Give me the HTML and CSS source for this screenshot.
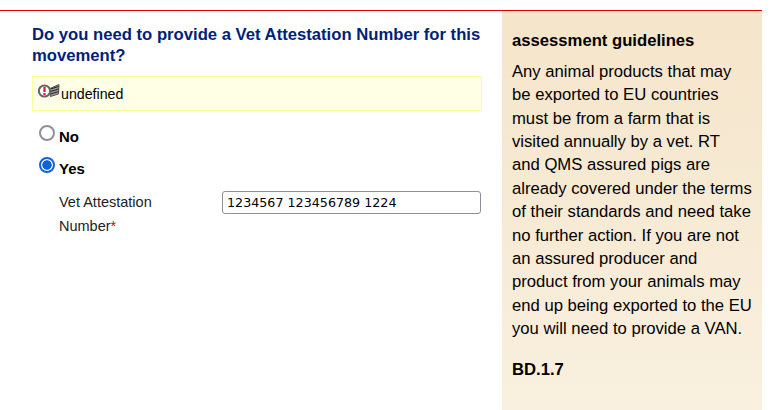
FILE: index.html
```html
<!DOCTYPE html>
<html lang="en">
<head>
<meta charset="utf-8">
<title>Vet Attestation Number</title>
<link rel="stylesheet" href="styles.css">
</head>
<body>
<div class="page">
  <main class="main">
    <h2 class="question">Do you need to provide a Vet Attestation Number for this movement?</h2>
    <div class="alert">
      <svg class="alert-icon" width="23" height="15" viewBox="0 0 23 15" aria-hidden="true">
        <path d="M12 4.5 L21 0.5 L20.5 10 L12.5 12.5 Z" fill="#999" stroke="#555" stroke-width="1"/>
        <path d="M12.5 5 L20.5 2.5 M12.5 7.5 L20.5 5 M12.5 10 L20.5 7.5" stroke="#222" stroke-width="1"/>
        <circle cx="6.5" cy="7" r="5.6" fill="#fff" stroke="#666" stroke-width="2"/>
        <rect x="5.4" y="3" width="2.2" height="5" fill="#d2202a"/>
        <rect x="5.4" y="9" width="2.2" height="2" fill="#d2202a"/>
      </svg>
      <span>undefined</span>
    </div>
    <label class="choice"><input class="radio" type="radio" name="vet"><span>No</span></label>
    <label class="choice"><input class="radio" type="radio" name="vet" checked><span>Yes</span></label>
    <div class="field">
      <label class="field-label" for="van">Vet Attestation Number<span class="req">*</span></label>
      <input class="field-input" id="van" type="text" value="1234567 123456789 1224">
    </div>
  </main>
  <aside class="side">
    <h3 class="side-title">assessment guidelines</h3>
    <p class="side-text">Any animal products that may be exported to EU countries must be from a farm that is visited annually by a vet. RT and QMS assured pigs are already covered under the terms of their standards and need take no further action. If you are not an assured producer and product from your animals may end up being exported to the EU you will need to provide a VAN.</p>
    <p class="side-ref">BD.1.7</p>
  </aside>
</div>
</body>
</html>
```
FILE: styles.css
```css
html, body { margin: 0; padding: 0; background: #fff; }
body { font-family: "Liberation Sans", Arial, sans-serif; color: #000; height: 410px; overflow: hidden; }
.page { display: flex; width: 762px; height: 400px; margin-top: 10px; border-top: 1px solid #e00000; box-sizing: border-box; }
.main { width: 450px; margin-left: 32px; margin-right: 20px; padding-top: 14px; }
.question { margin: 0; font-size: 16.67px; line-height: 20.5px; font-weight: bold; color: #001f78; }
.alert { display: flex; align-items: center; height: 35px; margin-top: 10px; padding-left: 5px; box-sizing: border-box; background: #ffffe6; border: 1px solid #ffff99; font-size: 14.2px; }
.alert-icon { flex: none; margin-top: -5px; }
.choice { display: flex; align-items: center; height: 32px; padding-left: 7px; font-size: 15px; font-weight: bold; }
.choice:first-of-type { margin-top: 9px; }
.radio { appearance: none; width: 16px; height: 16px; margin: 0 4px 0 0; box-sizing: border-box; position: relative; top: -3px; border: 2px solid #8f8f9d; border-radius: 50%; background: #fff; }
.radio:checked { border-color: #0f62dc; background: radial-gradient(circle, #0f62dc 0 4.4px, #fff 5px); }
.field { display: flex; align-items: flex-start; padding-left: 27px; margin-top: 7px; font-size: 14.5px; }
.field-label { width: 163px; padding-right: 40px; box-sizing: border-box; line-height: 24px; margin-top: -1px; color: #222; }
.req { color: #e00000; }
.field-input { width: 259px; height: 23px; box-sizing: border-box; padding: 0 4px; font-family: "DejaVu Sans", Verdana, sans-serif; font-size: 12.7px; border: 1px solid #8f8f9d; border-radius: 3px; color: #000; background: #fff; }
.side { width: 260px; padding: 19px 10px 0; box-sizing: border-box; background: linear-gradient(#f5e5ca, #f9f0df); }
.side-title { margin: 0; font-size: 16.67px; line-height: 22px; font-weight: bold; }
.side-text { margin: 8px 0 0; font-size: 16.67px; line-height: 23.36px; }
.side-ref { margin: 18px 0 0; font-size: 16.67px; line-height: 23px; font-weight: bold; }
```
